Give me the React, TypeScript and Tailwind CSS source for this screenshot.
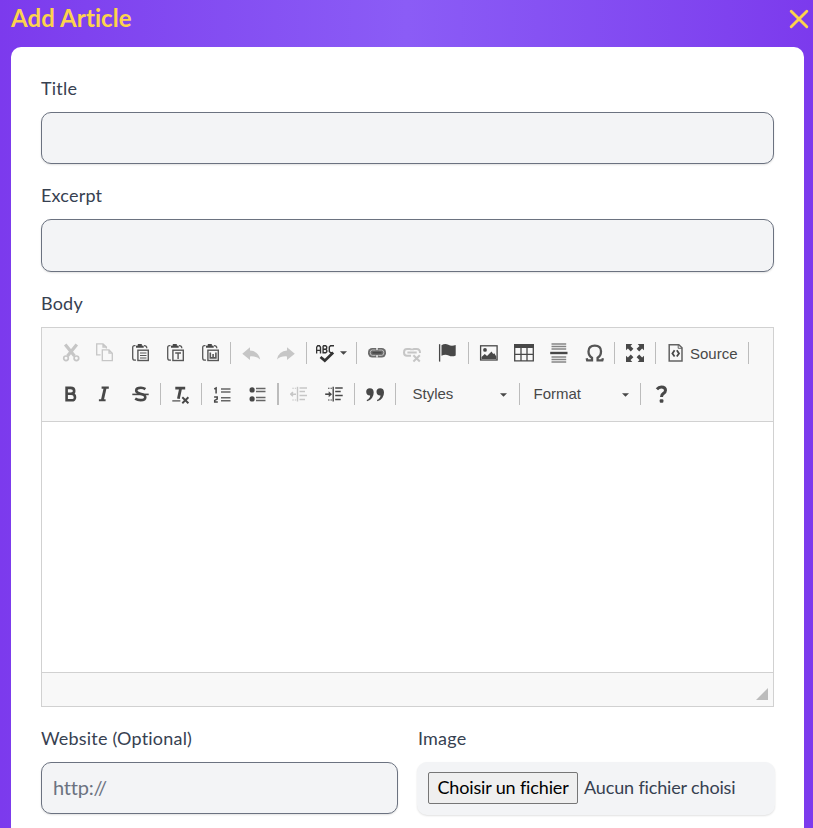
import type { ReactNode } from "react";

const DARK = "#484848";
const LIGHT = "#c6c6c6";

function Tool({ children, label }: { children: ReactNode; label: string }) {
  return (
    <button aria-label={label} className="h-5 w-[35px] shrink-0 pl-2">
      <svg width="20" height="20" viewBox="0 0 20 20" fill="none" className="block">
        {children}
      </svg>
    </button>
  );
}

function Sep({ className = "ml-0.5 mr-0.5 w-px" }: { className?: string }) {
  return <span className={`h-[22px] shrink-0 bg-[#bcbcbc] ${className}`} />;
}

function Caret({ className = "" }: { className?: string }) {
  return (
    <svg width="7" height="4" viewBox="0 0 7 4" className={`shrink-0 ${className}`}>
      <path d="M0 .3H7L3.5 3.8Z" fill={DARK} />
    </svg>
  );
}

function Clipboard({ children }: { children: ReactNode }) {
  return (
    <g stroke="#585858">
      <path d="M4.5 2.6H3.5Q1.7 2.6 1.7 4.6V15Q1.7 17.2 4 17.2H5" strokeWidth="1.3" />
      <path d="M13 2.6Q15.8 2.5 15.8 5.3" strokeWidth="1.3" />
      <path d="M5 4.7V2.8L6.8 2.5V1H10.8V2.5L12.7 2.8V4.7Z" fill={DARK} stroke="none" />
      <rect x="6.9" y="7.2" width="10.4" height="10.3" strokeWidth="1.4" />
      {children}
    </g>
  );
}

function ListLines({ y }: { y: number }) {
  return (
    <g stroke="#666" strokeWidth="1.5">
      <path d={`M9 ${y}H18.5M9 ${y + 3}H18.5`} />
    </g>
  );
}

function IndentLines({ color }: { color: string }) {
  return (
    <g stroke={color}>
      <path d="M7.5 2.8V17.5" strokeWidth="1.4" />
      <path d="M9.5 4H17M9.5 7.6H15M9.5 11.6H17M9.5 15.6H15" strokeWidth="1.5" />
      <path d="M2.3 4.3H6.2M2.3 16H6.2" strokeWidth="1.1" strokeDasharray="1.5 1" />
    </g>
  );
}

function Toolbar() {
  return (
    <div className="flex h-[94px] flex-col gap-[19px] border-b border-[#d1d1d1] bg-[#f8f8f8] pl-[11px] pt-3.5 font-['Liberation_Sans',Arial,sans-serif] text-[15px] text-[#484848]">
      <div className="flex h-[22px] items-center">
        <Tool label="Cut">
          <g stroke={LIGHT}>
            <path d="M4.2 1.5L13.5 13M15.8 1.5L6.5 13" strokeWidth="3.2" />
            <circle cx="5" cy="15.3" r="2.3" strokeWidth="1.7" />
            <circle cx="15.4" cy="15.3" r="2.3" strokeWidth="1.7" />
          </g>
        </Tool>
        <Tool label="Copy">
          <g stroke={LIGHT} strokeWidth="1.3">
            <path d="M4.6 11.8H.7V.8H7L10.4 4V5.4M7 .8V4H10.4" />
            <path d="M6.3 6.8H13L16.3 10.2V17.6H6.3ZM13 6.8V10.2H16.3" />
          </g>
        </Tool>
        <Tool label="Paste">
          <Clipboard>
            <path d="M9 10H15.5M9 12.5H15.5M9 15H15.5" strokeWidth="1.2" />
          </Clipboard>
        </Tool>
        <Tool label="Paste as plain text">
          <Clipboard>
            <path d="M9.2 10H15M12.1 10V16" strokeWidth="1.4" />
          </Clipboard>
        </Tool>
        <Tool label="Paste from Word">
          <Clipboard>
            <path d="M9.3 9.4V14.9H14.9V9.4M12.1 11V15" strokeWidth="1.6" />
          </Clipboard>
        </Tool>
        <Sep />
        <Tool label="Undo">
          <path d="M1.3 10.8L9 4.2V7.6Q17.4 8 19.2 16.4Q15.5 12.9 9 13.4V17Z" fill={LIGHT} />
        </Tool>
        <Tool label="Redo">
          <path d="M18.8 10.8L11 4.2V7.6Q2.8 8 1 16.4Q4.7 12.9 11 13.4V17Z" fill={LIGHT} />
        </Tool>
        <Sep className="ml-[3px] mr-0.5 w-px" />
        <button aria-label="Spell check" className="flex h-5 w-[45px] shrink-0 items-center pl-[7px]">
          <svg width="20" height="20" viewBox="0 0 20 20" fill="none">
            <g stroke="#333" strokeWidth="1.4">
              <path d="M.6 10.5V4.3L1.7 2.7H3.4L4.5 4.3V10.5M.6 7.4H4.5" />
              <path d="M7.1 2.7V9.8H9.7L10.8 8.8V7.2L9.7 6.2H7.1M7.1 2.7H9.7L10.7 3.7V5.3L9.7 6.2" />
              <path d="M18 2.7H14.6L13.3 4V8.4L14.6 9.8H16" />
            </g>
            <path d="M4.5 14L8.8 17.6L17.2 9.5" stroke="#333" strokeWidth="2.7" />
          </svg>
          <Caret className="ml-[3.5px]" />
        </button>
        <Sep />
        <Tool label="Link">
          <rect x="1" y="5" width="18" height="9.4" rx="4.2" fill="#6b6b6b" />
          <path d="M8.6 7H5.4Q3.2 7 3.2 9.7T5.4 12.4H8.6M11.4 7H14.6Q16.8 7 16.8 9.7T14.6 12.4H11.4" stroke="#c5c5c5" strokeWidth=".9" />
          <path d="M5.5 9.7H14.5" stroke={DARK} strokeWidth="1.8" />
          <path d="M10 4.8V7.3M10 12.1V14.6" stroke="#f8f8f8" strokeWidth="1.4" />
        </Tool>
        <Tool label="Unlink">
          <g stroke={LIGHT} strokeWidth="2">
            <path d="M8.6 6.1H5Q2 6.1 2 9.4T5 12.7H9M11.2 6.1H14.8Q18 6.1 18 9.9M5.4 9.4H14.7M9 5.5V7.2M11 5.5V7.2" />
            <path d="M11.4 12.2L17.8 18.5M17.8 12.2L11.4 18.5" strokeWidth="2" />
          </g>
        </Tool>
        <Tool label="Anchor">
          <path d="M2.6 1.2V18.6" stroke={DARK} strokeWidth="1.3" />
          <path d="M4.5 2.3Q8-.1 11.3 1.8T18.7 2V12.5Q15.2 14.2 11.7 12.5T4.5 12.8Z" fill={DARK} />
        </Tool>
        <Sep className="ml-1 mr-0.5 w-px" />
        <Tool label="Image">
          <rect x="1.6" y="2.8" width="16.5" height="14.2" stroke={DARK} strokeWidth="1.3" />
          <path d="M2.5 16V14L5.8 11L8 13L12.5 8.6L14.2 11L15.3 10.3L17.3 13.4V16Z" fill={DARK} />
          <circle cx="6" cy="6.9" r="1.9" fill={DARK} />
        </Tool>
        <Tool label="Table">
          <path d="M0 1H20V5H0Z" fill={DARK} />
          <path d="M.7 2V17.9H19.3V2M7 5V18M13 5V18M.7 11.4H19.3" stroke={DARK} strokeWidth="1.3" />
        </Tool>
        <Tool label="Horizontal line">
          <path d="M2.5 1H17.2M2.5 3.5H17.2M2.5 6H17.2M2.5 14H17.2M2.5 16.5H17.2M2.5 19H17.2" stroke="#858585" strokeWidth="1.3" />
          <path d="M1.2 10H18.5" stroke={DARK} strokeWidth="2.4" />
        </Tool>
        <Tool label="Special character">
          <path d="M2.7 15.3L3.2 17.4H8V14.8Q4.5 12.7 4.5 8.5Q4.5 2.7 10.8 2.7T17 8.5Q17 12.7 13.6 14.8V17.4H18.3L18.9 15.3" stroke="#555" strokeWidth="2.3" />
        </Tool>
        <Sep className="ml-[3px] mr-0.5 w-px" />
        <Tool label="Maximize">
          <g fill={DARK}>
            <path d="M1 1H7.3L5.5 2.9L8.4 5.8L5.8 8.4L2.9 5.5L1 7.3Z" />
            <path d="M19 1V7.3L17.1 5.5L14.2 8.4L11.6 5.8L14.5 2.9L12.7 1Z" />
            <path d="M1 19V12.7L2.9 14.5L5.8 11.6L8.4 14.2L5.5 17.1L7.3 19Z" />
            <path d="M19 19H12.7L14.5 17.1L11.6 14.2L14.2 11.6L17.1 14.5L19 12.7Z" />
          </g>
        </Tool>
        <Sep className="ml-[3px] mr-0.5 w-px" />
        <button className="flex h-5 w-[90px] shrink-0 items-center pl-2">
          <svg width="20" height="20" viewBox="0 0 20 20" fill="none">
            <path d="M3.2 1.8H12.8L16 4.8V17.9H3.2Z" stroke="#636363" strokeWidth="1.5" />
            <path d="M12.2 1.5V5.3H16" stroke="#636363" strokeWidth="1" />
            <path d="M8.6 7.3L6.4 10.4L8.6 13.5M10.8 7.3L13 10.4L10.8 13.5" stroke={DARK} strokeWidth="1.8" />
          </svg>
          <span className="ml-[4px] mt-0.5 leading-5">Source</span>
        </button>
        <Sep className="w-px" />
      </div>

      <div className="flex h-[22px] items-center">
        <Tool label="Bold">
          <path d="M5.6 3.9H9.7Q13.2 3.9 13.2 6.9Q13.2 9.6 10 9.7H5.6ZM5.6 9.8H10.2Q14 9.8 14 13.2T10.2 16.3H5.6Z" stroke={DARK} strokeWidth="2.6" />
        </Tool>
        <Tool label="Italic">
          <path d="M5.6 3.6H12.8M2.9 16.2H9.6" stroke={DARK} strokeWidth="2.1" />
          <path d="M9.1 4L6.4 16" stroke={DARK} strokeWidth="2.9" />
        </Tool>
        <Tool label="Strikethrough">
          <path d="M14.4 5.1Q12.4 3.7 9.9 3.7Q5.2 3.7 5.2 6.6Q5.2 8.8 9.4 9.7Q14.3 10.7 14.3 13.2Q14.3 16.1 9.6 16.1Q6.6 16.1 4.2 14.6" stroke={DARK} strokeWidth="2.6" />
          <path d="M1.3 10.4H17.7" stroke={DARK} strokeWidth="1.6" />
        </Tool>
        <Sep />
        <Tool label="Remove format">
          <path d="M4.3 4.1H14.2M9.7 4L7.4 14.8" stroke={DARK} strokeWidth="2.8" />
          <path d="M1.3 16.9H9.4" stroke={DARK} strokeWidth="1.2" />
          <path d="M11.3 13.3L17.4 19.3M17.4 13.3L11.3 19.3" stroke={DARK} strokeWidth="1.9" />
        </Tool>
        <Sep className="ml-[3px] mr-0.5 w-px" />
        <Tool label="Numbered list">
          <path d="M2.3 5L4.1 4V9.6M2.1 12.9H5.2V15.1L2.7 16.4V17.9H5.8" stroke={DARK} strokeWidth="1.5" />
          <ListLines y={4.9} />
          <ListLines y={13.8} />
        </Tool>
        <Tool label="Bulleted list">
          <circle cx="5.1" cy="5.9" r="2.6" fill={DARK} />
          <circle cx="5.1" cy="14.9" r="2.6" fill={DARK} />
          <ListLines y={4.4} />
          <ListLines y={13.4} />
        </Tool>
        <Sep className="ml-[3px] mr-[3px] w-0.5" />
        <Tool label="Decrease indent">
          <IndentLines color={LIGHT} />
          <path d="M.6 10.2H6M3 8.1L.7 10.2L3 12.3" stroke={LIGHT} strokeWidth="1.5" />
        </Tool>
        <Tool label="Increase indent">
          <g transform="translate(.7 0)">
            <IndentLines color={DARK} />
            <path d="M-.5 10.2H4.5" stroke={DARK} strokeWidth="1.6" />
            <path d="M3 7.2L6.3 10.2L3 13.2Z" fill={DARK} />
          </g>
        </Tool>
        <Sep />
        <Tool label="Block quote">
          <path d="M4.8 4.2Q8.7 4.2 8.7 8.5Q8.7 15 2 17.3L1.7 16.1Q5.1 14.3 5.2 11.4Q1.2 11.5 1.2 7.8Q1.2 4.2 4.8 4.2Z" fill={DARK} />
          <path d="M15.1 4.2Q19 4.2 19 8.5Q19 15 12.3 17.3L12 16.1Q15.4 14.3 15.5 11.4Q11.5 11.5 11.5 7.8Q11.5 4.2 15.1 4.2Z" fill={DARK} />
        </Tool>
        <Sep className="ml-[3px] w-px" />
        <button className="flex h-5 w-[123px] shrink-0 items-center justify-between pl-[16.5px] pr-3">
          <span className="leading-5">Styles</span>
          <Caret className="mt-px" />
        </button>
        <Sep className="w-px" />
        <button className="flex h-5 w-[120px] shrink-0 items-center justify-between pl-[13.5px] pr-[11.5px]">
          <span className="leading-5">Format</span>
          <Caret className="mt-px" />
        </button>
        <Sep className="mr-[3px] w-px" />
        <Tool label="About">
          <path d="M4.9 5.3Q6.8 3.1 9.3 3.1Q13.5 3.1 13.5 6.3Q13.5 8.1 11.5 9.4Q9.5 10.6 9.5 13" stroke={DARK} strokeWidth="3" />
          <rect x="7.7" y="15.3" width="3.7" height="3.5" rx="1" fill={DARK} />
        </Tool>
      </div>
    </div>
  );
}

const label = "block h-6 text-[18px] leading-[22px] tracking-[0.2px]";
const field =
  "block h-[52px] w-full rounded-[10px] border border-[#6b7280] bg-[#f3f4f6] px-[11px] text-[20px] shadow-[0_1px_2px_rgba(0,0,0,0.12)] outline-none placeholder:text-[#6b7280]";

export default function App() {
  return (
    <main className="h-[828px] w-[813px] overflow-hidden bg-linear-to-r from-[#7c3aed] via-[#8b5cf6] to-[#7c3aed] pl-[11px] pr-[9px] font-[Lato,sans-serif] text-[#374151]">
      <header className="flex h-[47px] items-start justify-between text-[#fcd34d]">
        <h1 className="mt-[3px] text-[24px] font-bold leading-[30px] tracking-[0.1px]">Add Article</h1>
        <button aria-label="Close" className="-mr-[5px] mt-[9px]">
          <svg width="20" height="20" viewBox="0 0 20 20" fill="none" className="block">
            <path d="M2.2 2.2L17.8 17.8M17.8 2.2L2.2 17.8" stroke="currentColor" strokeWidth="2.9" strokeLinecap="round" />
          </svg>
        </button>
      </header>
      <form className="h-[800px] rounded-[10px] bg-white px-[30px] pt-[30px]">
        <label htmlFor="title" className={label}>Title</label>
        <input id="title" className={`mt-[11px] ${field}`} />
        <label htmlFor="excerpt" className={`mt-5 ${label}`}>Excerpt</label>
        <input id="excerpt" className={`mt-[11px] ${field} !h-[53px]`} />
        <div className={`mt-5 ${label}`}>Body</div>
        <section className="mt-[11px] flex h-[380px] flex-col border border-[#d1d1d1]">
          <Toolbar />
          <div className="flex-1 bg-white" />
          <div className="flex h-[34px] items-end justify-end border-t border-[#d1d1d1] bg-[#f8f8f8] pb-1.5 pr-[5px]">
            <svg width="12" height="12" viewBox="0 0 12 12">
              <path d="M12 0V12H0Z" fill="#bcbcbc" />
            </svg>
          </div>
        </section>
        <div className="mt-5 flex gap-[19px]">
          <div className="w-[357px]">
            <label htmlFor="website" className={label}>Website (Optional)</label>
            <input id="website" placeholder="http://" className={`mt-[11px] ${field} pb-[3px] tracking-[-0.2px]`} />
          </div>
          <div className="-mr-px w-[358px]">
            <div className={`${label} pl-px`}>Image</div>
            <div className="mt-[11px] flex h-[53px] items-start rounded-[10px] bg-[#f3f4f6] pl-[11px] pt-2.5 text-[18px] leading-[30px] tracking-[-0.15px] shadow-[0_1px_2px_rgba(0,0,0,0.12)]">
              <button type="button" className="h-8 w-[150px] whitespace-nowrap rounded-[2px] border border-[#767676] bg-[#efefef] pb-0.5 leading-7 text-black">
                Choisir un fichier
              </button>
              <span className="ml-1.5 whitespace-nowrap">Aucun fichier choisi</span>
            </div>
          </div>
        </div>
      </form>
    </main>
  );
}
